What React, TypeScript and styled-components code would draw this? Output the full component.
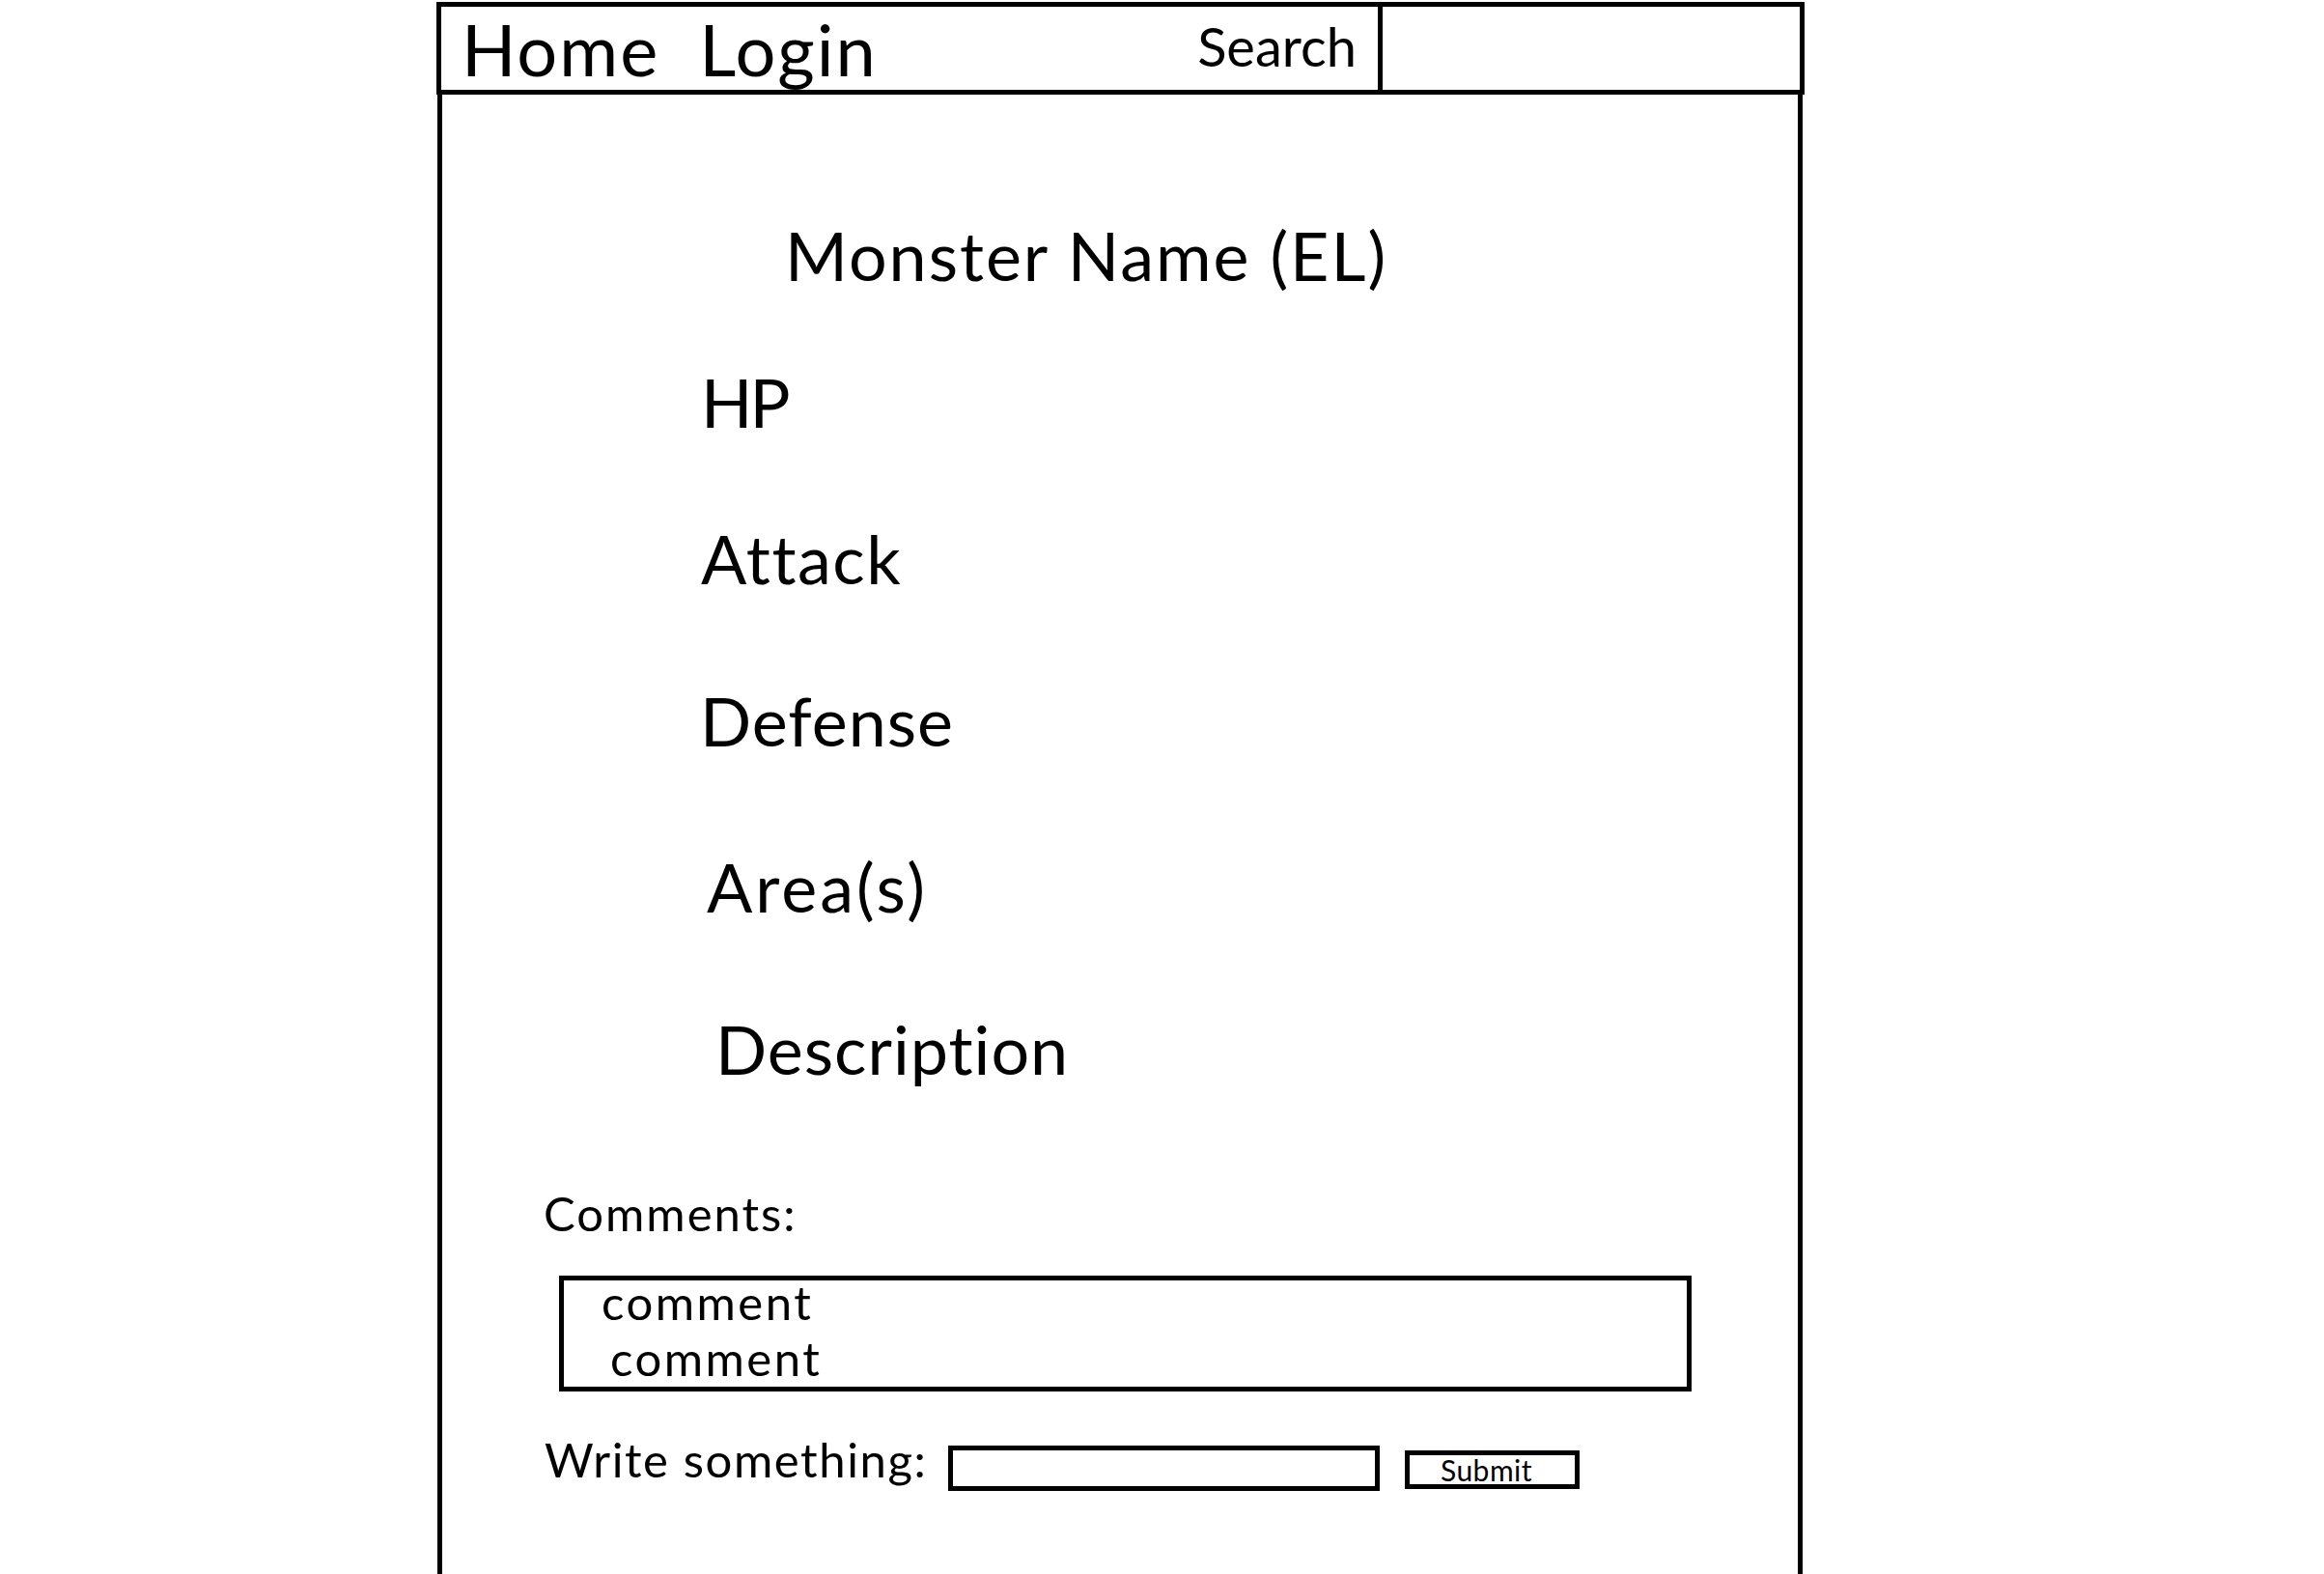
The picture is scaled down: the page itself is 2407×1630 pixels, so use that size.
import React from 'react';
import styled, { createGlobalStyle } from 'styled-components';

const GlobalStyle = createGlobalStyle`
  html, body {
    margin: 0;
    padding: 0;
    background: #fff;
  }
  body {
    font-family: Lato, 'Open Sans', sans-serif;
    font-variant-ligatures: none;
    color: #000;
  }
  * {
    box-sizing: border-box;
  }
`;

const Shell = styled.div`
  display: flex;
  flex-direction: column;
  width: 1417px;
  min-height: 100vh;
  margin-left: 452px;
  padding-top: 2px;
`;

const Nav = styled.nav`
  display: flex;
  height: 96px;
  border: 5px solid #000;
`;

const NavLinks = styled.div`
  display: flex;
  flex: 1;
  align-items: flex-start;
  gap: 41px;
  padding: 7px 0 0 21px;
`;

const NavLink = styled.a`
  font-size: 74px;
  line-height: 74px;
  letter-spacing: 2px;
  color: #000;
  text-decoration: none;
`;

const SearchLabel = styled.label`
  font-size: 56px;
  line-height: 56px;
  padding: 13px 22px 0 0;
`;

const SearchField = styled.div`
  width: 437px;
  border-left: 5px solid #000;
`;

const Frame = styled.main`
  flex: 1;
  display: flex;
  flex-direction: column;
  align-items: flex-start;
  margin: 0 2px 0 1px;
  padding-left: 102px;
  border-left: 5px solid #000;
  border-right: 5px solid #000;
`;

const Title = styled.h1`
  margin: 131px 0 0 253px;
  font-size: 70px;
  line-height: 70px;
  font-weight: 400;
  letter-spacing: 2px;
`;

const Stat = styled.div<{ $indent: number; $gap: number; $spacing: number }>`
  margin: ${(p) => p.$gap}px 0 0 ${(p) => p.$indent}px;
  font-size: 70px;
  line-height: 70px;
  letter-spacing: ${(p) => p.$spacing}px;
`;

const SectionLabel = styled.div`
  margin: 111px 0 0 3px;
  font-size: 49px;
  line-height: 49px;
  letter-spacing: 2px;
`;

const CommentBox = styled.div`
  width: 1173px;
  margin: 40px 0 0 19px;
  padding: 0 0 8px 39px;
  border: 5px solid #000;
`;

const CommentLine = styled.div<{ $indent: number; $gap: number }>`
  margin: ${(p) => p.$gap}px 0 0 ${(p) => p.$indent}px;
  font-size: 49px;
  line-height: 44px;
  letter-spacing: 2.5px;
`;

const WriteRow = styled.form`
  display: flex;
  align-items: flex-end;
  margin: 46px 0 0 4px;
`;

const WriteLabel = styled.label`
  width: 418px;
  margin-bottom: 8px;
  font-size: 49px;
  line-height: 49px;
  letter-spacing: 1.6px;
`;

const TextInput = styled.input`
  width: 447px;
  height: 47px;
  padding: 0 8px;
  border: 5px solid #000;
  border-radius: 0;
  outline: none;
  background: #fff;
`;

const SubmitButton = styled.button`
  width: 181px;
  height: 40px;
  margin: 0 0 2px 26px;
  padding: 0 12px 0 0;
  border: 5px solid #000;
  border-radius: 0;
  background: #fff;
  font-family: Lato, 'Open Sans', sans-serif;
  font-size: 30px;
  line-height: 28px;
  letter-spacing: 0.5px;
  color: #000;
`;

const stats = [
  { label: 'HP', indent: 166, gap: 82, spacing: -3 },
  { label: 'Attack', indent: 166, gap: 92, spacing: 1.5 },
  { label: 'Defense', indent: 165, gap: 98, spacing: 1 },
  { label: 'Area(s)', indent: 172, gap: 102, spacing: 3 },
  { label: 'Description', indent: 181, gap: 98, spacing: 1 },
];

const comments = [
  { text: 'comment', indent: 0, gap: 0 },
  { text: 'comment', indent: 9, gap: 14 },
];

export default function App() {
  return (
    <Shell>
      <GlobalStyle />
      <Nav>
        <NavLinks>
          <NavLink href="#">Home</NavLink>
          <NavLink href="#">Login</NavLink>
        </NavLinks>
        <SearchLabel>Search</SearchLabel>
        <SearchField />
      </Nav>
      <Frame>
        <Title>Monster Name (EL)</Title>
        {stats.map((s) => (
          <Stat key={s.label} $indent={s.indent} $gap={s.gap} $spacing={s.spacing}>
            {s.label}
          </Stat>
        ))}
        <SectionLabel>Comments:</SectionLabel>
        <CommentBox>
          {comments.map((c, i) => (
            <CommentLine key={i} $indent={c.indent} $gap={c.gap}>
              {c.text}
            </CommentLine>
          ))}
        </CommentBox>
        <WriteRow onSubmit={(e) => e.preventDefault()}>
          <WriteLabel>Write something:</WriteLabel>
          <TextInput type="text" />
          <SubmitButton type="submit">Submit</SubmitButton>
        </WriteRow>
      </Frame>
    </Shell>
  );
}
